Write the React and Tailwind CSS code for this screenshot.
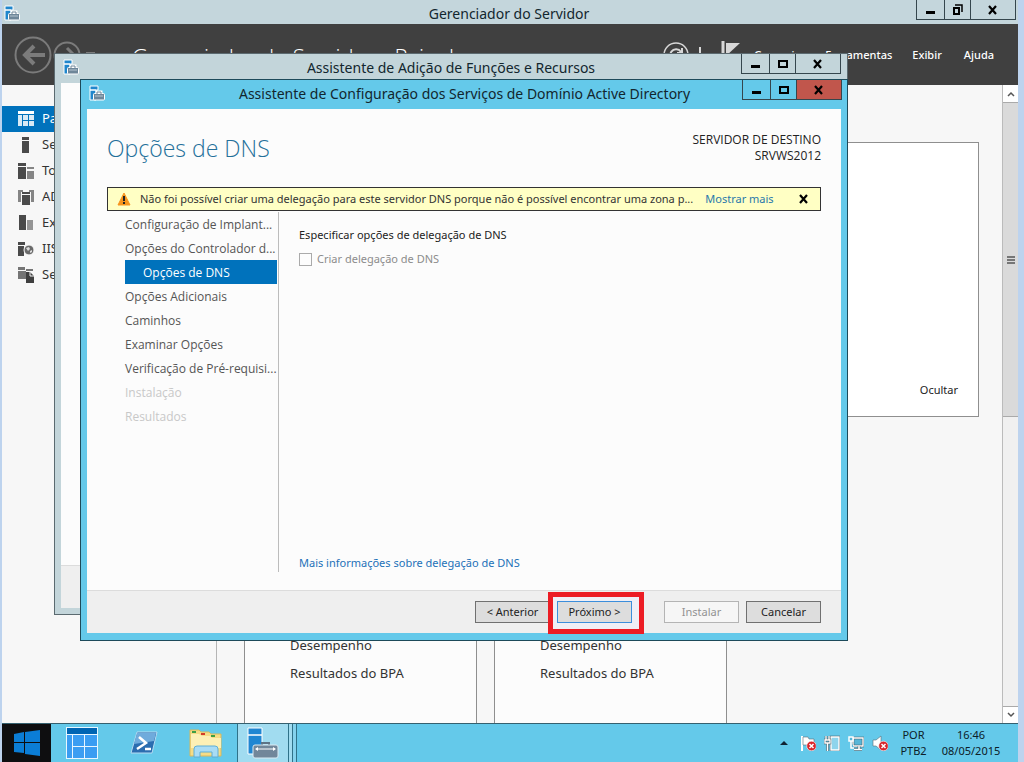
// Bureau Windows Server - assistente de configuração sobre o Gerenciador do Servidor
import React from 'react';
import clsx from 'clsx';

const STEPS = [
  { label: 'Configuração de Implant...' },
  { label: 'Opções do Controlador d...' },
  { label: 'Opções de DNS', state: 'active' },
  { label: 'Opções Adicionais' },
  { label: 'Caminhos' },
  { label: 'Examinar Opções' },
  { label: 'Verificação de Pré-requisi...' },
  { label: 'Instalação', state: 'disabled' },
  { label: 'Resultados', state: 'disabled' },
];

const SIDEBAR = [
  { label: 'Painel', icon: DashboardIcon, active: true },
  { label: 'Servidor', icon: LocalServerIcon },
  { label: 'Todos', icon: AllServersIcon },
  { label: 'AD DS', icon: AdIcon },
  { label: 'Exchange', icon: RoleIcon },
  { label: 'IIS', icon: IisIcon },
  { label: 'Serviços', icon: FilesIcon },
];

/* ---------- Ícones ---------- */

function ServerManagerIcon({ className }) {
  return (
    <svg viewBox="0 0 16 16" className={className} aria-hidden="true">
      <path d="M1 1h8v4H1zM1 5h6v10H1z" fill="#1f86cc" stroke="#fff" />
      <path d="M8 9V7h4v2" fill="none" stroke="#fff" strokeWidth="3" />
      <rect x="4.500" y="8.500" width="11" height="6.500" rx="1" fill="#6e8699" stroke="#fff" />
      <path d="M8 9V7h4v2" fill="none" stroke="#6e8699" />
      <path d="M6 11h8" stroke="#c9d6de" strokeWidth="0.800" />
    </svg>
  );
}

function DashboardIcon() {
  return (
    <svg viewBox="0 0 16 16" className="size-4" fill="#fff" aria-hidden="true">
      <path d="M0 0h16v3H0z" />
      <path d="M0 4h4v11H0zM5 4h5v5H5zM11 4h5v5h-5zM5 10h5v5H5zM11 10h5v5h-5z" opacity="0.850" />
    </svg>
  );
}

function LocalServerIcon() {
  return (
    <svg viewBox="0 0 16 16" className="size-4" fill="#4a4a4a" aria-hidden="true">
      <path d="M4 0h7v3H4zM4 4h7v12H4z" />
    </svg>
  );
}

function AllServersIcon() {
  return (
    <svg viewBox="0 0 16 16" className="size-4" aria-hidden="true">
      <path d="M0 0h8v3H0zM0 4h8v12H0z" fill="#4a4a4a" />
      <path d="M9 4h7v2H9zM9 8h7v8H9z" fill="#858585" />
    </svg>
  );
}

function AdIcon() {
  return (
    <svg viewBox="0 0 16 16" className="size-4" aria-hidden="true">
      <path d="M0 1h5v2H3v10H0zM16 1h-5v2h2v10h3z" fill="#858585" />
      <path d="M4 3h8v2H4zM4 6h8v10H4z" fill="#4a4a4a" />
    </svg>
  );
}

function RoleIcon() {
  return (
    <svg viewBox="0 0 16 16" className="size-4" aria-hidden="true">
      <path d="M1 0h7v15H1z" fill="#4a4a4a" />
      <path d="M9 5h6v10H9z" fill="#959595" />
    </svg>
  );
}

function IisIcon() {
  return (
    <svg viewBox="0 0 16 16" className="size-4" aria-hidden="true">
      <path d="M0 1h7v3H0zM0 5h6v10H0z" fill="#4a4a4a" />
      <circle cx="11" cy="9" r="5" fill="#6a6a6a" stroke="#f7f7f7" />
      <path d="M8 7l3-1 1 2-2 2zM12 10l2-1v2l-2 1z" fill="#ddd" />
    </svg>
  );
}

function FilesIcon() {
  return (
    <svg viewBox="0 0 16 16" className="size-4" aria-hidden="true">
      <path d="M0 0h7v3H0zM0 4h8v8H0zM8 2h7v2H8z" fill="#757575" />
      <path d="M8 5h4l4 4v7H8z" fill="#3f3f3f" />
      <path d="M12 5v4h4" fill="none" stroke="#f7f7f7" />
    </svg>
  );
}

function WindowGlyph({ kind }) {
  return (
    <svg viewBox="0 0 12 12" className="size-3" aria-hidden="true">
      {kind === 'min' && <path d="M1 7h9v3H1z" />}
      {kind === 'max' && <path d="M2 3h8v6H2z" fill="none" stroke="#000" strokeWidth="2" />}
      {kind === 'restore' && (
        <g fill="none" stroke="#000">
          <path d="M2 4h5v6H2z" strokeWidth="2" />
          <path d="M3 1h7v7" strokeWidth="1.500" />
        </g>
      )}
      {kind === 'close' && <path d="M2 2l7 8M9 2l-7 8" stroke="#000" strokeWidth="2.200" />}
    </svg>
  );
}

function WarningIcon() {
  return (
    <svg viewBox="0 0 14 14" className="size-[14px] shrink-0" aria-hidden="true">
      <path d="M7 1l6 12H1z" fill="#f7941d" stroke="#f7941d" strokeLinejoin="round" />
      <path d="M6 4h2v5H6zM6 10h2v2H6z" fill="#222" />
    </svg>
  );
}

function ErrorBadge() {
  return (
    <g>
      <circle cx="11.500" cy="11" r="4.800" fill="#d8262c" stroke="#fff" strokeWidth="0.600" />
      <path d="M9.500 9l4 4M13.500 9l-4 4" stroke="#fff" strokeWidth="1.500" />
    </g>
  );
}

/* ---------- Janelas ---------- */

function WindowControls({ middle = 'max', danger }) {
  const base = 'flex h-5 items-center justify-center border-r border-b border-[#35464d]';
  return (
    <div className="flex shrink-0 self-start border-l border-[#35464d]">
      <button type="button" aria-label="Minimizar" className={clsx(base, 'w-7')}>
        <WindowGlyph kind="min" />
      </button>
      <button type="button" aria-label="Maximizar" className={clsx(base, 'w-[26px]')}>
        <WindowGlyph kind={middle} />
      </button>
      <button type="button" aria-label="Fechar" className={clsx(base, 'w-[45px]', danger && 'bg-[#c1564c]')}>
        <WindowGlyph kind="close" />
      </button>
    </div>
  );
}

function TitleBar({ title, className, ...controls }) {
  return (
    <div className={clsx('flex', className)}>
      <ServerManagerIcon className="mt-[5px] size-4 shrink-0" />
      <h2 className="flex-1 pt-1 pl-[82px] text-center text-[14px] leading-5 whitespace-nowrap text-[#12262e]">
        {title}
      </h2>
      <WindowControls {...controls} />
    </div>
  );
}

function DialogButton({ children, className, ...props }) {
  return (
    <button
      type="button"
      className={clsx('h-[22px] w-[75px] border text-[11px] leading-5 whitespace-nowrap', className)}
      {...props}
    >
      {children}
    </button>
  );
}

function BackDialog() {
  return (
    <section className="absolute top-[53px] right-[176px] left-[54px] flex h-[562px] flex-col border border-[#5b6a70] bg-[#c3d5da]">
      <TitleBar title="Assistente de Adição de Funções e Recursos" className="h-[29px] pr-[6px] pl-2" />
      <div className="mx-[6px] mb-[6px] flex flex-1 flex-col bg-[#fcfcfc]">
        <div className="flex-1" />
        <div className="h-[43px] border-t border-[#dcdcdc] bg-[#efefef]" />
      </div>
    </section>
  );
}

function DnsWizard() {
  return (
    <section className="absolute top-[79px] right-[176px] left-20 border border-[#1d4a5a] bg-[#64c9ea]">
      <TitleBar
        title="Assistente de Configuração dos Serviços de Domínio Active Directory"
        className="h-[29px] pr-[5px] pl-2"
        danger
      />
      <div className="mx-[6px] mb-[7px] bg-[#fcfcfc]">
        <header className="flex h-[78px] items-start justify-between px-5">
          <h1 className="pt-[23px] font-['Open_Sans',sans-serif] text-[23px] leading-8 font-light text-[#24709a]">
            Opções de DNS
          </h1>
          <p className="pt-[23px] text-right font-['Open_Sans',sans-serif] text-[12px] leading-4 text-[#222]">
            SERVIDOR DE DESTINO
            <br />
            SRVWS2012
          </p>
        </header>

        {/* Aviso de delegação */}
        <div className="mx-5 flex h-6 items-center border border-[#333] bg-[#ffffc4] pr-2 pl-[9px] text-[11px] whitespace-nowrap text-[#333]">
          <WarningIcon />
          <p className="pl-[9px]">
            Não foi possível criar uma delegação para este servidor DNS porque não é possível encontrar uma zona p...
          </p>
          <a href="#mais" className="pl-3 text-[#2878ab]">Mostrar mais</a>
          <button type="button" aria-label="Fechar aviso" className="ml-auto flex size-4 items-center justify-center">
            <WindowGlyph kind="close" />
          </button>
        </div>

        <div className="flex h-[379px] pt-px pl-[38px]">
          <nav className="h-[360px] w-[154px] shrink-0 border-r border-[#bcbcbc]">
            <ul className="font-['Open_Sans',sans-serif] text-[12px] leading-[26px] whitespace-nowrap text-[#555]">
              {STEPS.map((step) => (
                <li
                  key={step.label}
                  className={clsx(
                    'h-6 w-[152px]',
                    step.state === 'active' && 'bg-[#0072bc] pl-[18px] text-white',
                    step.state === 'disabled' && 'text-[#c8c8c8]'
                  )}
                >
                  {step.label}
                </li>
              ))}
            </ul>
          </nav>

          <div className="flex h-[359px] flex-col pt-[15px] pl-5 text-[11px] leading-4">
            <p className="text-[#222]">Especificar opções de delegação de DNS</p>
            <label className="flex items-center gap-[5px] pt-2 text-[#8c8c8c]">
              <input type="checkbox" disabled className="size-[13px] appearance-none border border-[#aaa] bg-[#fcfcfc]" />
              Criar delegação de DNS
            </label>
            <a href="#ajuda" className="mt-auto text-[#1c71b8]">Mais informações sobre delegação de DNS</a>
          </div>
        </div>

        <footer className="flex h-[43px] items-start justify-end gap-[7px] border-t border-[#dcdcdc] bg-[#efefef] pt-[10px] pr-5">
          <DialogButton className="border-[#707070] bg-[#dddddd] text-[#222]">&lt; Anterior</DialogButton>
          <div className="relative mr-[25px] flex">
            <span className="absolute -top-[9px] -right-3 -bottom-[11px] -left-[9px] border-5 border-[#ec1c24] bg-[#efeff6]" />
            <DialogButton className="relative border-[#3c8edb] bg-[#dddddd] text-[#222]">Próximo &gt;</DialogButton>
          </div>
          <DialogButton disabled className="border-[#b4b4b4] bg-[#f6f6f6] text-[#929292]">
            Instalar
          </DialogButton>
          <DialogButton className="border-[#707070] bg-[#dddddd] text-[#222]">Cancelar</DialogButton>
        </footer>
      </div>
    </section>
  );
}

/* ---------- Gerenciador do Servidor ---------- */

function ManagerHeader() {
  return (
    <header className="flex h-[61px] shrink-0 items-center bg-[#404040] pr-6 pl-[11px] whitespace-nowrap text-white">
      <svg viewBox="0 0 84 40" className="h-10 w-[84px] shrink-0" fill="none" stroke="#7b7b7b" aria-hidden="true">
        <circle cx="20" cy="20" r="17.500" strokeWidth="2" />
        <path d="M32 20H11M21 11l-9 9 9 9" strokeWidth="4" />
        <circle cx="54" cy="20" r="12.500" strokeWidth="2" />
        <path d="M46 20h15M54 13l7 7-7 7" strokeWidth="3" />
        <path d="M73 18h9" strokeWidth="2" />
      </svg>
      <h1 className="pt-[2px] pl-[35px] font-['Open_Sans',sans-serif] text-[22px] leading-8 font-light">
        Gerenciador do Servidor ‣ Painel
      </h1>
      <svg viewBox="0 0 80 32" className="mr-3 ml-auto h-8 w-20 shrink-0" fill="none" stroke="#d8d8d8" aria-hidden="true">
        <circle cx="14" cy="16" r="12" strokeWidth="1.500" />
        <path d="M19 13a6 6 0 1 0 1 4M20 9v5h-5" strokeWidth="2" />
        <path d="M38 8v16" strokeWidth="2" />
        <path d="M61 2v26" strokeWidth="3" />
        <path d="M64 4h14L64 17z" fill="#d8d8d8" stroke="none" />
      </svg>
      <nav className="flex gap-5 pt-px text-[11px] leading-4 font-medium">
        <button type="button">Gerenciar</button>
        <button type="button">Ferramentas</button>
        <button type="button">Exibir</button>
        <button type="button" className="pl-[2px]">Ajuda</button>
      </nav>
    </header>
  );
}

function RoleTile() {
  return (
    <div className="flex h-full w-[233px] flex-col gap-2 border-x border-[#8f8f8f] bg-[#fcfcfc] pl-[45px] text-[13px] leading-5 text-[#333]">
      <p>Desempenho</p>
      <p>Resultados do BPA</p>
    </div>
  );
}

function ScrollBar() {
  return (
    <div className="flex w-4 shrink-0 flex-col border-l border-[#bbb] bg-[#f0f0f0]">
      <button type="button" aria-label="Rolar para cima" className="flex h-[18px] items-center justify-center border-b border-[#aaa] bg-white">
        <svg viewBox="0 0 8 6" className="h-[6px] w-2" aria-hidden="true">
          <path d="M1 5l3-3 3 3" fill="none" stroke="#555" strokeWidth="1.500" />
        </svg>
      </button>
      <div className="flex h-[314px] items-center justify-center border-b border-[#aaa] bg-[#dadada]">
        <svg viewBox="0 0 8 8" className="size-2" aria-hidden="true">
          <path d="M0 1h8M0 4h8M0 7h8" stroke="#555" strokeWidth="1.500" />
        </svg>
      </div>
      <button type="button" aria-label="Rolar para baixo" className="mt-auto flex h-[17px] items-center justify-center border-t border-[#aaa] bg-white">
        <svg viewBox="0 0 8 6" className="h-[6px] w-2" aria-hidden="true">
          <path d="M1 1l3 3 3-3" fill="none" stroke="#555" strokeWidth="1.500" />
        </svg>
      </button>
    </div>
  );
}

function ServerManager() {
  return (
    <section className="flex min-h-0 flex-1 flex-col">
      <TitleBar title="Gerenciador do Servidor" middle="restore" className="h-6 shrink-0 bg-[#c4d6dc] pr-[2px] pl-[2px]" />
      <ManagerHeader />
      <div className="flex min-h-0 flex-1 bg-[#f7f7f7]">
        <nav className="w-[215px] shrink-0 border-r border-[#b5b5b5] pt-[21px]">
          {SIDEBAR.map(({ label, icon: Icon, active }) => (
            <a
              key={label}
              href="#painel"
              className={clsx(
                'flex h-[26px] items-center gap-2 pl-4 text-[13px] whitespace-nowrap',
                active ? 'bg-[#0072bc] text-white' : 'text-[#333]'
              )}
            >
              <Icon />
              {label}
            </a>
          ))}
        </nav>
        <main className="flex min-w-0 flex-1 flex-col pr-[23px] pl-[27px]">
          <div className="mt-[57px] flex h-[275px] items-end justify-end border border-[#8f8f8f] bg-white pr-5 pb-[18px]">
            <button type="button" className="text-[11px] leading-4 text-[#222]">Ocultar</button>
          </div>
          <div className="mt-[218px] flex min-h-0 flex-1 gap-[17px]">
            <RoleTile />
            <RoleTile />
          </div>
        </main>
        <ScrollBar />
      </div>
    </section>
  );
}

/* ---------- Barra de tarefas ---------- */

function TaskBar() {
  return (
    <footer className="flex h-[39px] shrink-0 items-stretch border-t border-[#35606f] bg-[#64c9ea] text-[11px] leading-4 text-[#0d2028]">
      <button type="button" aria-label="Iniciar" className="flex w-[49px] items-center justify-center bg-[#0e0e10]">
        <svg viewBox="0 0 28 26" className="h-[26px] w-7" fill="#0b7dd6" aria-hidden="true">
          <path d="M1 4l10-2v10H1zM12 2l15-2v12H12zM1 13h10v10L1 22zM12 13h15v13l-15-2z" />
        </svg>
      </button>
      <button type="button" aria-label="Servidor" className="flex w-[62px] items-center justify-center">
        <svg viewBox="0 0 32 32" className="size-8" aria-hidden="true">
          <path d="M0 0h32v32H0z" fill="#e8f6ff" />
          <path d="M1 1h30v6H1z" fill="#0065b3" />
          <path d="M1 8h5v23H1zM7 8h11v11H7zM19 8h12v11H19zM7 20h11v11H7zM19 20h12v11H19z" fill="#3a9df2" />
        </svg>
      </button>
      <button type="button" aria-label="PowerShell" className="flex w-[62px] items-center justify-center">
        <svg viewBox="0 0 28 24" className="h-6 w-7" aria-hidden="true">
          <path d="M7 1h20l-5 21H1z" fill="#2b6db0" stroke="#b7dcf2" strokeLinejoin="round" />
          <path d="M7 2h19l-2 8-20 3z" fill="#6fabdc" />
          <path d="M9 6l7 6-9 6M15 18h6" fill="none" stroke="#fff" strokeWidth="2.500" />
        </svg>
      </button>
      <button type="button" aria-label="Explorador de Arquivos" className="flex w-[62px] items-center justify-center">
        <svg viewBox="0 0 34 30" className="h-[30px] w-[34px]" aria-hidden="true">
          <path d="M1 2h9l2 2h8l2 2h10v22H1z" fill="#f5dc86" stroke="#d8b95c" />
          <path d="M2 6h8l3 2h8l2 2h9v10H2z" fill="#fdf0b5" />
          <path d="M3 3h4v2H3z" fill="#3da046" />
          <path d="M12 5h4v2h-4z" fill="#d33c2a" />
          <path d="M22 7h4v2h-4z" fill="#3da046" />
          <path d="M5 29v-8q0-3 3-3h18q3 0 3 3v8h-6v-5H11v5z" fill="#a9dcf5" stroke="#5faed6" />
        </svg>
      </button>
      <button
        type="button"
        aria-label="Gerenciador do Servidor"
        className="flex w-[52px] items-center justify-center border-x border-[#2f7289] bg-[#a1dcf0]"
      >
        <svg viewBox="0 0 32 32" className="size-8" aria-hidden="true">
          <path d="M1 1h14v7H1zM1 8h14v19H1z" fill="#1f86d2" stroke="#fff" />
          <path d="M15 18v-2h7v2" fill="none" stroke="#5d7385" strokeWidth="2" />
          <rect x="6" y="18" width="25" height="13" rx="2" fill="#71879a" stroke="#dbeaf2" />
          <path d="M9 22h19" stroke="#fff" />
          <path d="M8 22l3-2v4zM29 22l-3-2v4z" fill="#fff" />
        </svg>
      </button>
      <span className="w-1 border-r border-[#2f7289] bg-[#a1dcf0]" />
      <span className="w-1 border-r border-[#2f7289] bg-[#84d2ed]" />

      <div className="ml-auto flex items-center pr-[15px]">
        <button type="button" aria-label="Mostrar ícones ocultos" className="mr-3">
          <svg viewBox="0 0 8 4" className="h-1 w-2" aria-hidden="true">
            <path d="M0 4l4-4 4 4z" fill="#123" />
          </svg>
        </button>
        <div className="flex gap-2">
          <svg viewBox="0 0 16 16" className="size-4" aria-hidden="true">
            <path d="M2 1v15" stroke="#fff" strokeWidth="2" />
            <path d="M3 2h5l1 2h5v6H3z" fill="#fff" stroke="#5a6d75" strokeWidth="0.600" />
            <ErrorBadge />
          </svg>
          <svg viewBox="0 0 16 16" className="size-4" fill="none" aria-hidden="true">
            <path d="M7 2h8v13H7z" fill="#8ed4ec" stroke="#40545d" strokeWidth="2.500" />
            <path d="M7 2h8v13H7z" fill="#8ed4ec" stroke="#fff" strokeWidth="1.400" />
            <path d="M2 1v4M5 1v4M1 5h5v3H1zM3.500 8v8" stroke="#40545d" strokeWidth="2.400" />
            <path d="M2 1v4M5 1v4M1 5h5v3H1zM3.500 8v8" stroke="#fff" strokeWidth="1.400" />
          </svg>
          <svg viewBox="0 0 16 16" className="size-4" fill="none" aria-hidden="true">
            <path d="M5 3h10v8H5z" fill="#57b6d8" stroke="#40545d" strokeWidth="2.500" />
            <path d="M5 3h10v8H5z" stroke="#fff" strokeWidth="1.400" />
            <path d="M11 11v3M6 14.500h8" stroke="#40545d" strokeWidth="2.600" />
            <path d="M11 11v3M6 14.500h8" stroke="#fff" strokeWidth="1.600" />
            <path d="M1 2h4v4H1zM3 6v7h3" fill="#57b6d8" stroke="#fff" strokeWidth="1.500" />
          </svg>
          <svg viewBox="0 0 16 16" className="size-4" aria-hidden="true">
            <path d="M1 5h3l5-4v14l-5-4H1z" fill="#fff" stroke="#5a6d75" strokeWidth="0.600" />
            <ErrorBadge />
          </svg>
        </div>
        <p className="w-[51px] text-center">
          POR
          <br />
          PTB2
        </p>
        <p className="w-[64px] text-center whitespace-nowrap">
          16:46
          <br />
          08/05/2015
        </p>
      </div>
    </footer>
  );
}

export default function App() {
  return (
    <div className="relative flex h-screen flex-col overflow-hidden bg-[#bdd3ee] pr-[6px] pl-[2px] font-['Noto_Sans','Open_Sans',sans-serif]">
      <ServerManager />
      <TaskBar />
      <BackDialog />
      <DnsWizard />
    </div>
  );
}
